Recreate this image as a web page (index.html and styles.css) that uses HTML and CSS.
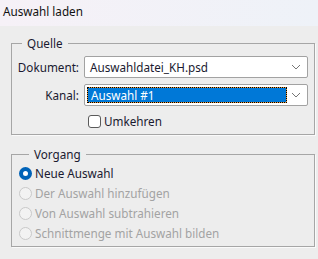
FILE: index.html
```html
<!DOCTYPE html>
<html lang="de">
<head>
    <meta charset="UTF-8">
    <title>Auswahl laden</title>
    <link rel="stylesheet" href="styles.css">
</head>
<body>

    <div class="titlebar">Auswahl laden</div>

    <fieldset class="group">
        <legend>Quelle</legend>

        <div class="field-row first">
            <label class="field-label">Dokument:</label>
            <div class="select">
                <span class="select-text">Auswahldatei_KH.psd</span>
                <svg class="chevron" width="10" height="6" viewBox="0 0 10 6"><path d="M1 1 L5 5 L9 1" fill="none" stroke="#767676" stroke-width="1"/></svg>
            </div>
        </div>

        <div class="field-row">
            <label class="field-label">Kanal:</label>
            <div class="select">
                <span class="select-text focused">Auswahl #1</span>
                <svg class="chevron" width="10" height="6" viewBox="0 0 10 6"><path d="M1 1 L5 5 L9 1" fill="none" stroke="#767676" stroke-width="1"/></svg>
            </div>
        </div>

        <div class="check-row">
            <span class="checkbox"></span>
            <span>Umkehren</span>
        </div>
    </fieldset>

    <fieldset class="group group-mode">
        <legend>Vorgang</legend>

        <div class="radio-row">
            <span class="radio checked"></span>
            <span>Neue Auswahl</span>
        </div>
        <div class="radio-row disabled">
            <span class="radio"></span>
            <span>Der Auswahl hinzufügen</span>
        </div>
        <div class="radio-row disabled">
            <span class="radio"></span>
            <span>Von Auswahl subtrahieren</span>
        </div>
        <div class="radio-row disabled">
            <span class="radio"></span>
            <span>Schnittmenge mit Auswahl bilden</span>
        </div>
    </fieldset>

</body>
</html>
```

FILE: styles.css
```css
body {
    margin: 0;
    background: #ededed;
    font-family: "Noto Sans", "Open Sans", sans-serif;
    font-size: 11.7px;
    color: #1a1a30;
    width: 318px;
    height: 259px;
    overflow: hidden;
}
.titlebar {
    height: 26px;
    line-height: 22px;
    padding-left: 3px;
    background: linear-gradient(to right, #f6f1f7, #eef2f8);
    color: #111;
}
.group {
    margin: 9px 3px 0 11px;
    padding: 0 6px 0 0;
    border: 1px solid #a6a6a6;
    box-shadow: 1px 1px 0 #fafafa;
    min-width: 0;
}
.group legend {
    margin-left: 10px;
    padding: 0 5px;
    line-height: 16px;
}
.field-row {
    display: flex;
    align-items: center;
    gap: 5px;
    margin-top: 6px;
}
.field-row.first {
    margin-top: 5px;
}
.field-label {
    width: 67px;
    text-align: right;
}
.select {
    flex: 1;
    height: 22px;
    box-sizing: border-box;
    border: 1px solid #a2a2a2;
    border-radius: 2px;
    background: #fff;
    display: flex;
    align-items: center;
    padding: 0 6px 0 2px;
}
.select-text {
    flex: 1;
    padding: 0 3px;
    height: 16px;
    line-height: 16px;
    box-sizing: border-box;
}
.select-text.focused {
    margin-right: 4px;
    background: #0078d7;
    color: #fff;
    border: 1px solid #e89a3c;
    outline: 1px dotted #000;
    outline-offset: -1px;
    line-height: 14px;
}
.chevron {
    flex: none;
}
.check-row {
    display: flex;
    align-items: center;
    gap: 3px;
    margin: 5px 0 3px 76px;
    height: 20px;
}
.checkbox {
    width: 13px;
    height: 13px;
    box-sizing: border-box;
    border: 1px solid #5a5a5a;
    border-radius: 3px;
    background: #fff;
}
.group-mode {
    margin-top: 11px;
    padding: 1px 6px 3px 7px;
}
.radio-row {
    display: flex;
    align-items: center;
    gap: 3px;
    height: 20px;
}
.radio-row.disabled {
    color: #a3a3a3;
}
.radio {
    width: 13px;
    height: 13px;
    box-sizing: border-box;
    border-radius: 50%;
    border: 1px solid #c9c9c9;
    background: #f2f2f2;
}
.radio.checked {
    border: 4px solid #0063b8;
    background: #fff;
}
```
